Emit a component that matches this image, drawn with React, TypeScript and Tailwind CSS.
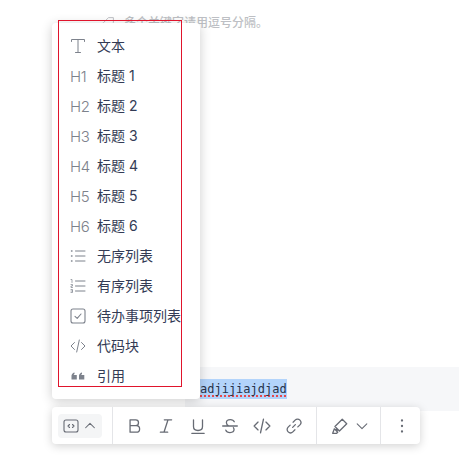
import type { ReactNode } from 'react';

const sans = "font-['Inter','Noto_Sans_CJK_SC',sans-serif]";

function Ico({ children, size = 16, width = 1, className = '' }: { children: ReactNode; size?: number; width?: number; className?: string }) {
  return (
    <svg
      width={size}
      height={size}
      viewBox="0 0 16 16"
      fill="none"
      stroke="currentColor"
      strokeWidth={width}
      strokeLinecap="round"
      strokeLinejoin="round"
      className={className}
    >
      {children}
    </svg>
  );
}

function HeadingIcon({ level }: { level: number }) {
  return <span className="text-[15px] font-light leading-none tracking-[-0.4px] text-[#7d828c]">H{level}</span>;
}

const menuItems: { label: string; icon: ReactNode }[] = [
  {
    label: '文本',
    icon: (
      <Ico>
        <path d="M1.5 3.5V1.5H14.5V3.5M8 1.5V14.5M5.5 14.5H10.5" />
      </Ico>
    ),
  },
  { label: '标题 1', icon: <HeadingIcon level={1} /> },
  { label: '标题 2', icon: <HeadingIcon level={2} /> },
  { label: '标题 3', icon: <HeadingIcon level={3} /> },
  { label: '标题 4', icon: <HeadingIcon level={4} /> },
  { label: '标题 5', icon: <HeadingIcon level={5} /> },
  { label: '标题 6', icon: <HeadingIcon level={6} /> },
  {
    label: '无序列表',
    icon: (
      <Ico>
        <path d="M5.5 3H15M5.5 8H15M5.5 13H15" />
        <path d="M1.5 3H2M1.5 8H2M1.5 13H2" strokeWidth="1.4" />
      </Ico>
    ),
  },
  {
    label: '有序列表',
    icon: (
      <Ico>
        <path d="M5.5 3H15M5.5 8H15M5.5 13H15" />
        <path d="M1 1.5H2V4.5M1 6.5H2.5V8H1V9.5H2.5M1 11.5H2.5V14.5H1M1 13H2.5" strokeWidth="0.7" />
      </Ico>
    ),
  },
  {
    label: '待办事项列表',
    icon: (
      <Ico width={1.1}>
        <rect x="1" y="1" width="14" height="14" rx="2" />
        <path d="M5 8.3L7.2 10.3L11 6" />
      </Ico>
    ),
  },
  {
    label: '代码块',
    icon: (
      <Ico>
        <path d="M4.5 4.5L1 8L4.5 11.5M11.5 4.5L15 8L11.5 11.5M9.3 2L6.7 14" />
      </Ico>
    ),
  },
  {
    label: '引用',
    icon: (
      <Ico>
        <path
          d="M1.5 7.5C2 5.8 3 4.8 4.5 4.5V6C4 6.2 3.7 6.5 3.6 7H6.8V11.5H1.5ZM9 7.5C9.5 5.8 10.5 4.8 12 4.5V6C11.5 6.2 11.2 6.5 11.1 7H14.3V11.5H9Z"
          fill="currentColor"
          stroke="none"
        />
      </Ico>
    ),
  },
];

function ToolBtn({ children }: { children: ReactNode }) {
  return <div className="flex h-6 w-8 items-center justify-center text-[#676b74]">{children}</div>;
}

export default function App() {
  return (
    <div className={`relative h-[469px] w-[459px] overflow-hidden bg-white ${sans}`}>
      {/* Keyword hint behind the menu */}
      <div className="flex h-[44px] items-start gap-[9px] pl-[102px] pt-[14px] text-[12px] font-medium leading-[18px] text-[#bdbfc4]">
        <Ico size={13} className="mt-[2px] text-[#b0b2b7]">
          <path d="M2 8L8 2H14V8L8 14Z" />
        </Ico>
        <span>多个关键字请用逗号分隔。</span>
      </div>

      {/* Code block */}
      <div className="ml-[185px] mt-[323px] flex h-[44px] items-center bg-[#f6f7f9] pl-[15px]">
        <span className="inline-block h-[20px] bg-[#b3d4fb] font-['DejaVu_Sans_Mono',monospace] text-[12px] leading-[20px] text-[#27324a] underline decoration-[#e5484d] decoration-dotted decoration-2 underline-offset-2">
          adjijiajdjad
        </span>
      </div>

      {/* Block type menu */}
      <div className="absolute left-[52px] top-[23px] flex h-[376px] w-[148px] flex-col rounded-[4px] bg-white pl-[18px] pt-[8px] shadow-[0_2px_12px_rgba(0,0,0,0.2)]">
        {menuItems.map((item) => (
          <div key={item.label} className="flex h-[30px] shrink-0 items-center">
            <div className="flex w-[27px] shrink-0 items-center text-[#7d828c]">{item.icon}</div>
            <span className="whitespace-nowrap text-[14px] leading-[20px] text-[#333b55]">{item.label}</span>
          </div>
        ))}
      </div>

      {/* Red annotation frame */}
      <div className="absolute left-[58px] top-[20px] h-[367px] w-[124px] border border-[#e0142c]" />

      {/* Floating toolbar */}
      <div className="absolute left-[52px] top-[407px] flex h-[37px] w-[368px] items-center rounded-[4px] bg-white shadow-[0_2px_10px_rgba(0,0,0,0.18)]">
        <div className="flex h-full w-[61px] shrink-0 items-center border-r border-[#e4e5e8] pl-[6px]">
          <div className="flex h-[24px] w-[44px] items-center justify-center gap-[4px] rounded-[4px] bg-[#f4f5f6] text-[#676b74]">
            <Ico size={16} width={1.1}>
              <rect x="1" y="2" width="14" height="12" rx="2" />
              <path d="M6.5 6.5L5 8L6.5 9.5M9.5 6.5L11 8L9.5 9.5" />
            </Ico>
            <Ico size={14} width={1.2}>
              <path d="M3 10L8 5L13 10" />
            </Ico>
          </div>
        </div>

        <div className="flex h-full w-[204px] shrink-0 items-center border-r border-[#e4e5e8] pl-[5px]">
          <ToolBtn>
            <Ico size={18} width={1.15}>
              <path d="M4.5 2.5H9.5C11.2 2.5 12 3.6 12 5C12 6.4 11.2 7.7 9.5 7.7H4.5ZM4.5 7.7H10C12 7.7 13 9 13 10.6C13 12.2 12 13.5 10 13.5H4.5Z" />
            </Ico>
          </ToolBtn>
          <ToolBtn>
            <Ico size={18} width={1.15}>
              <path d="M6.5 2.5H13M3 13.5H9.5M9.8 2.5L6.2 13.5" />
            </Ico>
          </ToolBtn>
          <ToolBtn>
            <Ico size={18} width={1.15}>
              <path d="M4 2.5V8.5C4 10.7 5.6 12 8 12C10.4 12 12 10.7 12 8.5V2.5M2.5 14.5H13.5" />
            </Ico>
          </ToolBtn>
          <ToolBtn>
            <Ico size={18} width={1.15}>
              <path d="M11.8 4.2C11.3 3 10 2.3 8.3 2.3C6.3 2.3 4.8 3.3 4.8 5C4.8 6.2 5.4 7.2 7 8M1.5 8H14.5M11 9.5C11.5 10.2 11.6 10.6 11.6 11.2C11.6 12.8 10 13.8 8 13.8C6.2 13.8 4.8 13 4.3 11.7" />
            </Ico>
          </ToolBtn>
          <ToolBtn>
            <Ico size={18} width={1.15}>
              <path d="M4.5 4.5L1 8L4.5 11.5M11.5 4.5L15 8L11.5 11.5M9.3 2L6.7 14" />
            </Ico>
          </ToolBtn>
          <ToolBtn>
            <Ico size={18} width={1.15}>
              <path d="M6.8 9.2L9.2 6.8M7.2 4.6L9 2.8C10.2 1.6 12.1 1.6 13.3 2.8C14.4 4 14.4 5.8 13.3 7L11.4 8.8M8.8 11.4L7 13.2C5.8 14.4 4 14.4 2.8 13.2C1.6 12 1.6 10.2 2.8 9L4.6 7.2" />
            </Ico>
          </ToolBtn>
        </div>

        <div className="flex h-full w-[64px] shrink-0 items-center gap-[6px] border-r border-[#e4e5e8] pl-[14px] text-[#676b74]">
          <Ico size={18} width={1.15}>
            <path d="M1.5 14.5H5L6 13.5L3 10.5L1.5 14.5ZM3.5 8.5L10 2L14 6L7.5 12.5L3.5 8.5ZM4.5 11L5.5 12" />
          </Ico>
          <Ico size={14} width={1.2}>
            <path d="M2.5 5.5L8 11L13.5 5.5" />
          </Ico>
        </div>

        <div className="flex flex-1 items-center justify-center pl-[2px] text-[#676b74]">
          <Ico size={16} width={2.3}>
            <path d="M8 2.5V2.51M8 8V8.01M8 13.5V13.51" />
          </Ico>
        </div>
      </div>
    </div>
  );
}
